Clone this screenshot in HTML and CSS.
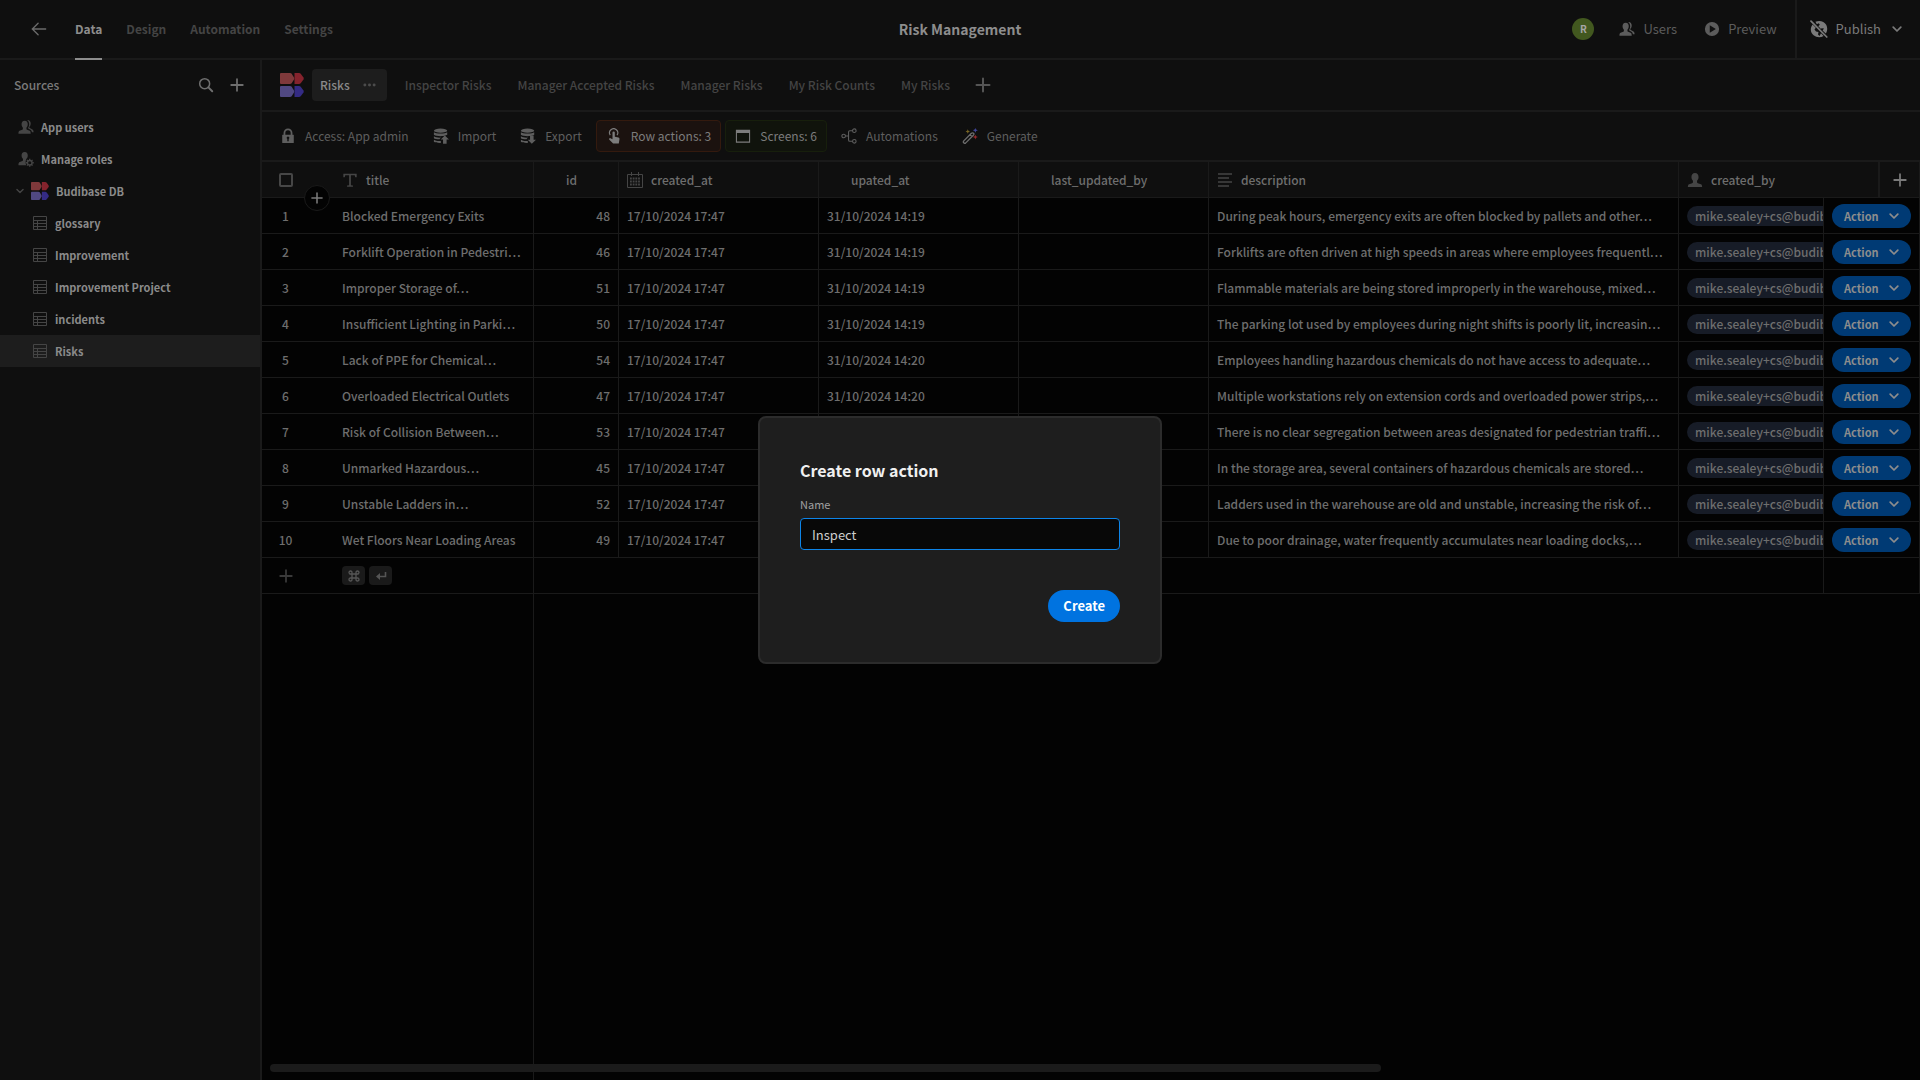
FILE: index.html
```html
<!DOCTYPE html>
<html lang="en">
<head>
<meta charset="utf-8">
<meta name="viewport" content="width=device-width, initial-scale=1">
<title>Risk Management</title>
<link rel="stylesheet" href="styles.css">
</head>
<body>
<svg class="defs" aria-hidden="true">
  <symbol id="i-back" viewBox="0 0 18 18"><path d="M16.500 9H1.800M8 2.500L1.500 9L8 15.500" fill="none" stroke="currentColor" stroke-width="1.500" stroke-linecap="round"/></symbol>
  <symbol id="i-search" viewBox="0 0 18 18"><circle cx="7.500" cy="7.500" r="5.600" fill="none" stroke="currentColor" stroke-width="1.700"/><path d="M11.700 11.700L16 16" stroke="currentColor" stroke-width="2.200" stroke-linecap="round"/></symbol>
  <symbol id="i-plus" viewBox="0 0 18 18"><path d="M9 2.500V15.500M2.500 9H15.500" stroke="currentColor" stroke-width="2" stroke-linecap="round"/></symbol>
  <symbol id="i-chev" viewBox="0 0 10 10"><path d="M1.200 3.200L5 7L8.800 3.200" fill="none" stroke="currentColor" stroke-width="1.700" stroke-linecap="round" stroke-linejoin="round"/></symbol>
  <symbol id="i-user" viewBox="0 0 18 18"><path d="M9 1C11.700 1 13 3 13 5.500C13 7.600 12.200 8.800 11.300 9.800V11.500C11.300 12 11.600 12.400 12.200 12.600L15.700 13.700C16.600 14.100 17 15 17 17H1C1 15 1.400 14.100 2.300 13.700L5.800 12.600C6.400 12.400 6.700 12 6.700 11.500V9.800C5.800 8.800 5 7.600 5 5.500C5 3 6.300 1 9 1Z" fill="currentColor"/></symbol>
  <symbol id="i-users" viewBox="0 0 18 18"><path d="M7.500 2C10 2 11 3.800 11 6C11 7.800 10.300 9 9.500 9.800V11.200C9.500 11.700 9.800 12 10.300 12.200L13 13.200C14 13.600 14.300 14.500 14.300 16.500H.5C.5 14.500 .9 13.600 1.800 13.200L4.700 12.200C5.200 12 5.500 11.700 5.500 11.200V9.800C4.700 9 4 7.800 4 6C4 3.800 5 2 7.500 2Z" fill="currentColor"/><path d="M10.200 1C13 .8 14.300 2.600 14.300 5C14.300 6.800 13.600 8 12.800 8.800V9.900L16.300 11.800C17.200 12.300 17.500 13 17.500 15H15.700C15.400 13.300 14.900 12.500 14 12L11.500 10.800V9.600C12.200 8.700 12.600 7.400 12.600 5.800C12.600 3.700 11.700 2 10.200 1Z" fill="currentColor"/></symbol>
  <symbol id="i-roles" viewBox="0 0 18 18"><path d="M7.500 1C10 1 11 2.800 11 5C11 6.800 10.300 8 9.500 8.800C8.400 10.600 8.200 14 9.200 16H.5C.5 13.800 1 12.800 2 12.500L4.900 11.300C5.400 11 5.600 10.600 5.600 10V8.800C4.700 8 4 6.800 4 5C4 2.800 5 1 7.500 1Z" fill="currentColor"/><circle cx="13.200" cy="13.200" r="2.600" fill="none" stroke="currentColor" stroke-width="1.600"/><path d="M13.200 8.700V10.300M13.200 16.100V17.700M8.700 13.200H10.300M16.100 13.200H17.700M10 10L11.100 11.100M15.300 15.300L16.400 16.400M16.400 10L15.300 11.100M11.100 15.300L10 16.400" stroke="currentColor" stroke-width="1.500"/></symbol>
  <symbol id="i-table" viewBox="0 0 14 14"><path d="M.5 .5H13.500V13.500H.5ZM.5 4.500H13.500M.5 7.500H13.500M.5 10.500H13.500M4.500 4.500V13.500" fill="none" stroke="currentColor"/></symbol>
  <symbol id="i-logo" viewBox="0 0 24 24"><path d="M0 1Q0 0 1 0H10Q11 0 11.700 .8L14 4.500Q14.600 5.500 14 6.500L11.700 10.200Q11 11 10 11H1Q0 11 0 10Z" fill="#7f393b"/><path d="M14.500 0H19Q20 0 20.700 .8L23.500 4.500Q24 5.500 23.500 6.500L20.700 10.200Q20 11 19 11H14.500Z" fill="#85232d"/><path d="M0 14Q0 13 1 13H10Q11 13 11.700 13.800L14 17.500Q14.600 18.500 14 19.500L11.700 23.200Q11 24 10 24H1Q0 24 0 23Z" fill="#504882"/><path d="M14.500 13H19Q20 13 20.700 13.800L23.500 17.500Q24 18.500 23.500 19.500L20.700 23.200Q20 24 19 24H14.500Z" fill="#342b84"/></symbol>
  <symbol id="i-play" viewBox="0 0 18 18"><path fill-rule="evenodd" d="M9 1A8 8 0 1 1 9 17A8 8 0 1 1 9 1ZM6.500 4.800V13.200L13.300 9Z" fill="currentColor"/></symbol>
  <symbol id="i-globe" viewBox="0 0 18 18"><path d="M2.600 4.500C-.2 8 .4 12.600 3.600 15.300C6.500 17.700 10.600 17.900 13.600 16L11 13.200L9.500 16L8 14.500L8.500 12L6 11.500L4.500 9.500L5.800 7.800Z" fill="currentColor"/><path d="M5.400 1.800C9.500 -.2 14.200 1.300 16.200 4.800C17.700 7.600 17.500 11 15.800 13.600L12.600 10.400L14 8.500L11.500 8.300L11 9L8.300 6.200L9.800 4.800L8.800 3.300L6.800 4.200Z" fill="currentColor"/><path d="M1 1.200L16.800 17" stroke="currentColor" stroke-width="1.700" stroke-linecap="round"/></symbol>
  <symbol id="i-more" viewBox="0 0 14 4"><circle cx="2" cy="2" r="1.600" fill="currentColor"/><circle cx="7" cy="2" r="1.600" fill="currentColor"/><circle cx="12" cy="2" r="1.600" fill="currentColor"/></symbol>
  <symbol id="i-lock" viewBox="0 0 18 18"><path d="M5 8V5.500A4 4 0 0 1 13 5.500V8" fill="none" stroke="currentColor" stroke-width="2"/><path fill-rule="evenodd" d="M3 7.500H15Q15.500 7.500 15.500 8V16.500Q15.500 17 15 17H3Q2.500 17 2.500 16.500V8Q2.500 7.500 3 7.500ZM8.200 12.500V15H9.800V12.500A1.500 1.500 0 1 0 8.200 12.500Z" fill="currentColor"/></symbol>
  <symbol id="i-db" viewBox="0 0 18 18"><ellipse cx="8.500" cy="3" rx="7.500" ry="2.300" fill="currentColor"/><path d="M1 4.800C3 6.800 14 6.800 16 4.800V7.500L14 8.500C11 9.600 3.500 9.500 1 7.600ZM1 9.300C3 10.700 6 11 8.700 10.800L7.400 12.700C5 12.800 2 12.300 1 11.500ZM1 13.200C3 14.600 6 14.700 8.800 14.500V16.800C6 17 2 16.500 1 15.500Z" fill="currentColor"/></symbol>
  <symbol id="i-import" viewBox="0 0 18 18"><use href="#i-db" width="18" height="18"/><path d="M13.300 8.500L18 13H15.300V17.800H11.300V13H8.700Z" fill="currentColor"/></symbol>
  <symbol id="i-export" viewBox="0 0 18 18"><use href="#i-db" width="18" height="18"/><path d="M13.300 17.800L18 13.300H15.300V8.500H11.300V13.300H8.700Z" fill="currentColor"/></symbol>
  <symbol id="i-touch" viewBox="0 0 18 18"><path d="M4.800 8A4.600 4.600 0 1 1 12.400 8" fill="none" stroke="currentColor" stroke-width="1.300"/><path d="M7.300 5.200A1.300 1.300 0 0 1 9.900 5.200V9.800L14 10.600Q15.300 11 15.200 12.500L14.400 17.500H8L3.500 12.800Q3.400 11.200 5 11.400L7.300 12.700Z" fill="currentColor"/></symbol>
  <symbol id="i-screen" viewBox="0 0 18 18"><path fill-rule="evenodd" d="M1 2H17V16.500H1ZM2.200 5.500V15.300H15.800V5.500Z" fill="currentColor"/></symbol>
  <symbol id="i-flow" viewBox="0 0 18 18"><g fill="none" stroke="currentColor" stroke-width="1.200"><circle cx="3" cy="9" r="2"/><circle cx="15" cy="3" r="2"/><circle cx="15" cy="15" r="2"/><path d="M5 9H8.500M13 3H10Q8.500 3 8.500 4.500V13.500Q8.500 15 10 15H13"/></g></symbol>
  <symbol id="i-wand" viewBox="0 0 18 18"><path d="M2 14.500L10.500 6Q12 5 13 6T12.500 8.500L4 17Q3 17.700 2 16.700T2 14.500ZM9 7.500L11.300 9.700" fill="none" stroke="#6d6d6d" stroke-width="1.500"/><path d="M6.500 1.500L7.200 3.200L9 4L7.200 4.700L6.500 6.500L5.800 4.700L4 4L5.800 3.200Z" fill="#776423"/><path d="M15 0L15.800 1.700L17.800 2.500L15.800 3.300L15 5.300L14.200 3.300L12.200 2.500L14.200 1.700Z" fill="#40469a"/><path d="M15 7.500L15.800 9.400L17.800 10.200L15.800 11L15 13L14.200 11L12.200 10.200L14.200 9.400Z" fill="#97282b"/></symbol>
  <symbol id="i-text" viewBox="0 0 18 18"><path d="M1.500 2H16.500V6H15L14.300 3.700H10V14.800L12.300 15.200V16.500H5.700V15.200L8 14.800V3.700H3.700L3 6H1.500Z" fill="currentColor"/></symbol>
  <symbol id="i-cal" viewBox="0 0 16 16"><path d="M.5 2.500H15.500V15.500H.5ZM4.500 0V4M11.500 0V4" fill="none" stroke="currentColor"/><path d="M3 6.500H13M3 9.500H13M3 12.500H13" stroke="currentColor" stroke-width="1.800" stroke-dasharray="1.800 .9"/></symbol>
  <symbol id="i-lines" viewBox="0 0 16 16"><path d="M1 2H15M1 6H12M1 10H15M1 14H12" stroke="currentColor" stroke-width="1.500"/></symbol>
  <symbol id="i-cmd" viewBox="0 0 12 12"><path d="M4 4H8V8H4ZM4 4H2.700A1.500 1.500 0 1 1 4 2.700ZM8 4V2.700A1.500 1.500 0 1 1 9.300 4ZM8 8H9.300A1.500 1.500 0 1 1 8 9.300ZM4 8V9.300A1.500 1.500 0 1 1 2.700 8Z" fill="none" stroke="currentColor" stroke-width="1.300"/></symbol>
  <symbol id="i-enter" viewBox="0 0 12 12"><path d="M10.500 2V6.500H3" fill="none" stroke="currentColor" stroke-width="1.600"/><path d="M5 3V10L1 6.500Z" fill="currentColor"/></symbol>
</svg>

<div class="app">
  <header class="topnav">
    <nav class="topnav-left">
      <a class="back" href="#" aria-label="Back"><svg class="ic16"><use href="#i-back"/></svg></a>
      <a class="navtab active" href="#">Data</a>
      <a class="navtab" href="#">Design</a>
      <a class="navtab" href="#">Automation</a>
      <a class="navtab" href="#">Settings</a>
    </nav>
    <h1 class="app-title">Risk Management</h1>
    <div class="topnav-right">
      <span class="avatar">R</span>
      <button class="navbtn users"><svg class="ic16"><use href="#i-users"/></svg>Users</button>
      <button class="navbtn preview"><svg class="ic16"><use href="#i-play"/></svg>Preview</button>
      <button class="navbtn publish"><svg class="ic18"><use href="#i-globe"/></svg>Publish<svg class="ic10"><use href="#i-chev"/></svg></button>
    </div>
  </header>

  <div class="workspace">
    <aside class="sidebar">
      <div class="side-head">
        <h2>Sources</h2>
        <button aria-label="Search"><svg class="ic16"><use href="#i-search"/></svg></button>
        <button aria-label="Add source"><svg class="ic16"><use href="#i-plus"/></svg></button>
      </div>
      <nav class="side-list">
        <a href="#" class="side-item"><svg class="ic16"><use href="#i-users"/></svg>App users</a>
        <a href="#" class="side-item"><svg class="ic16"><use href="#i-roles"/></svg>Manage roles</a>
        <a href="#" class="side-item db"><svg class="ic8"><use href="#i-chev"/></svg><svg class="ic18"><use href="#i-logo"/></svg>Budibase DB</a>
        <a href="#" class="side-item tbl"><svg class="ic14"><use href="#i-table"/></svg>glossary</a>
        <a href="#" class="side-item tbl"><svg class="ic14"><use href="#i-table"/></svg>Improvement</a>
        <a href="#" class="side-item tbl"><svg class="ic14"><use href="#i-table"/></svg>Improvement Project</a>
        <a href="#" class="side-item tbl"><svg class="ic14"><use href="#i-table"/></svg>incidents</a>
        <a href="#" class="side-item tbl selected"><svg class="ic14"><use href="#i-table"/></svg>Risks</a>
      </nav>
    </aside>

    <main class="content">
      <nav class="views">
        <svg class="ic24"><use href="#i-logo"/></svg>
        <a href="#" class="view current">Risks<svg class="more"><use href="#i-more"/></svg></a>
        <a href="#" class="view">Inspector Risks</a>
        <a href="#" class="view">Manager Accepted Risks</a>
        <a href="#" class="view">Manager Risks</a>
        <a href="#" class="view">My Risk Counts</a>
        <a href="#" class="view">My Risks</a>
        <button class="view-add" aria-label="Add view"><svg class="ic18"><use href="#i-plus"/></svg></button>
      </nav>

      <div class="toolbar">
        <button class="tool"><svg class="ic16"><use href="#i-lock"/></svg>Access: App admin</button>
        <button class="tool"><svg class="ic16"><use href="#i-import"/></svg>Import</button>
        <button class="tool"><svg class="ic16"><use href="#i-export"/></svg>Export</button>
        <button class="tool orange"><svg class="ic16"><use href="#i-touch"/></svg>Row actions: 3</button>
        <button class="tool green"><svg class="ic16"><use href="#i-screen"/></svg>Screens: 6</button>
        <button class="tool"><svg class="ic16"><use href="#i-flow"/></svg>Automations</button>
        <button class="tool"><svg class="ic16"><use href="#i-wand"/></svg>Generate</button>
      </div>

      <div class="grid">
        <table>
          <colgroup>
            <col class="c-num"><col class="c-title"><col class="c-id"><col class="c-date"><col class="c-date"><col class="c-by"><col><col class="c-created"><col class="c-act"><col class="c-add">
          </colgroup>
          <thead>
            <tr>
              <th class="num"><input type="checkbox" aria-label="Select all rows"><button class="insert" aria-label="Insert row"><svg class="ic14"><use href="#i-plus"/></svg></button></th>
              <th class="sticky"><span class="head"><svg class="ic16"><use href="#i-text"/></svg>title</span></th>
              <th><span class="head"><span class="ic16"></span>id</span></th>
              <th><span class="head"><svg class="ic16"><use href="#i-cal"/></svg>created_at</span></th>
              <th><span class="head"><span class="ic16"></span>upated_at</span></th>
              <th><span class="head"><span class="ic16"></span>last_updated_by</span></th>
              <th><span class="head"><svg class="ic16"><use href="#i-lines"/></svg>description</span></th>
              <th colspan="2"><span class="head"><svg class="ic16"><use href="#i-user"/></svg>created_by</span></th>
              <th class="addcol"><button aria-label="Add column"><svg class="ic16"><use href="#i-plus"/></svg></button></th>
            </tr>
          </thead>
          <tbody>
            <tr><td class="num">1</td><td class="sticky">Blocked Emergency Exits</td><td class="id">48</td><td>17/10/2024 17:47</td><td>31/10/2024 14:19</td><td></td><td>During peak hours, emergency exits are often blocked by pallets and other…</td><td class="who"><span>mike.sealey+cs@budib</span></td><td class="act" colspan="2"><button>Action<svg class="ic10"><use href="#i-chev"/></svg></button></td></tr>
            <tr><td class="num">2</td><td class="sticky">Forklift Operation in Pedestri…</td><td class="id">46</td><td>17/10/2024 17:47</td><td>31/10/2024 14:19</td><td></td><td>Forklifts are often driven at high speeds in areas where employees frequentl…</td><td class="who"><span>mike.sealey+cs@budib</span></td><td class="act" colspan="2"><button>Action<svg class="ic10"><use href="#i-chev"/></svg></button></td></tr>
            <tr><td class="num">3</td><td class="sticky">Improper Storage of…</td><td class="id">51</td><td>17/10/2024 17:47</td><td>31/10/2024 14:19</td><td></td><td>Flammable materials are being stored improperly in the warehouse, mixed…</td><td class="who"><span>mike.sealey+cs@budib</span></td><td class="act" colspan="2"><button>Action<svg class="ic10"><use href="#i-chev"/></svg></button></td></tr>
            <tr><td class="num">4</td><td class="sticky">Insufficient Lighting in Parki…</td><td class="id">50</td><td>17/10/2024 17:47</td><td>31/10/2024 14:19</td><td></td><td>The parking lot used by employees during night shifts is poorly lit, increasin…</td><td class="who"><span>mike.sealey+cs@budib</span></td><td class="act" colspan="2"><button>Action<svg class="ic10"><use href="#i-chev"/></svg></button></td></tr>
            <tr><td class="num">5</td><td class="sticky">Lack of PPE for Chemical…</td><td class="id">54</td><td>17/10/2024 17:47</td><td>31/10/2024 14:20</td><td></td><td>Employees handling hazardous chemicals do not have access to adequate…</td><td class="who"><span>mike.sealey+cs@budib</span></td><td class="act" colspan="2"><button>Action<svg class="ic10"><use href="#i-chev"/></svg></button></td></tr>
            <tr><td class="num">6</td><td class="sticky">Overloaded Electrical Outlets</td><td class="id">47</td><td>17/10/2024 17:47</td><td>31/10/2024 14:20</td><td></td><td>Multiple workstations rely on extension cords and overloaded power strips,…</td><td class="who"><span>mike.sealey+cs@budib</span></td><td class="act" colspan="2"><button>Action<svg class="ic10"><use href="#i-chev"/></svg></button></td></tr>
            <tr><td class="num">7</td><td class="sticky">Risk of Collision Between…</td><td class="id">53</td><td>17/10/2024 17:47</td><td></td><td></td><td>There is no clear segregation between areas designated for pedestrian traffi…</td><td class="who"><span>mike.sealey+cs@budib</span></td><td class="act" colspan="2"><button>Action<svg class="ic10"><use href="#i-chev"/></svg></button></td></tr>
            <tr><td class="num">8</td><td class="sticky">Unmarked Hazardous…</td><td class="id">45</td><td>17/10/2024 17:47</td><td></td><td></td><td>In the storage area, several containers of hazardous chemicals are stored…</td><td class="who"><span>mike.sealey+cs@budib</span></td><td class="act" colspan="2"><button>Action<svg class="ic10"><use href="#i-chev"/></svg></button></td></tr>
            <tr><td class="num">9</td><td class="sticky">Unstable Ladders in…</td><td class="id">52</td><td>17/10/2024 17:47</td><td></td><td></td><td>Ladders used in the warehouse are old and unstable, increasing the risk of…</td><td class="who"><span>mike.sealey+cs@budib</span></td><td class="act" colspan="2"><button>Action<svg class="ic10"><use href="#i-chev"/></svg></button></td></tr>
            <tr><td class="num">10</td><td class="sticky">Wet Floors Near Loading Areas</td><td class="id">49</td><td>17/10/2024 17:47</td><td></td><td></td><td>Due to poor drainage, water frequently accumulates near loading docks,…</td><td class="who"><span>mike.sealey+cs@budib</span></td><td class="act" colspan="2"><button>Action<svg class="ic10"><use href="#i-chev"/></svg></button></td></tr>
            <tr class="newrow"><td class="num"><svg class="ic16"><use href="#i-plus"/></svg></td><td class="sticky"><span class="keys"><kbd><svg class="ic12"><use href="#i-cmd"/></svg></kbd><kbd><svg class="ic12"><use href="#i-enter"/></svg></kbd></span></td><td colspan="6"></td><td colspan="2"></td></tr>
          </tbody>
        </table>
        <div class="scrollbar"></div>
      </div>
    </main>
  </div>
</div>

<div class="underlay">
  <form class="modal" role="dialog" aria-labelledby="modal-title">
    <h2 id="modal-title">Create row action</h2>
    <label for="action-name">Name</label>
    <input id="action-name" type="text" value="Inspect">
    <button type="button">Create</button>
  </form>
</div>
</body>
</html>
```

FILE: styles.css
```css
* { box-sizing: border-box; }
html, body { height: 100%; }
body {
  margin: 0;
  background: #030303;
  color: #6e6e6e;
  font: 400 12px/20px "Noto Sans CJK KR", "Noto Sans", sans-serif;
  overflow: hidden;
}
a { color: inherit; text-decoration: none; }
button {
  display: flex;
  align-items: center;
  margin: 0;
  padding: 0;
  border: 0;
  background: none;
  color: inherit;
  font: inherit;
}
h1, h2 { margin: 0; font-size: 12px; }
svg { display: block; flex: none; }
.defs { position: absolute; width: 0; height: 0; }
.ic8 { width: 8px; height: 8px; }
.ic10 { width: 10px; height: 10px; }
.ic12 { width: 12px; height: 12px; }
.ic14 { width: 14px; height: 14px; }
.ic16 { width: 16px; height: 16px; flex: none; }
.ic18 { width: 18px; height: 18px; }
.ic24 { width: 24px; height: 24px; }

.app { display: flex; flex-direction: column; height: 100%; }

/* Top navigation */
.topnav {
  display: grid;
  grid-template-columns: 1fr auto 1fr;
  flex: none;
  height: 60px;
  border-bottom: 2px solid #1a1a1a;
  background: #0f0f0f;
}
.topnav-left { display: flex; align-items: stretch; gap: 24px; padding-left: 31px; }
.back { display: flex; align-items: center; margin-right: 4px; color: #6b6b6b; }
.navtab {
  display: flex;
  align-items: center;
  margin-bottom: -2px;
  border-bottom: 2px solid transparent;
  color: #444;
  font-weight: 700;
}
.navtab.active { color: #8d8d8d; border-color: #8d8d8d; }
.app-title { align-self: center; color: #8d8d8d; font-size: 14px; font-weight: 700; }
.topnav-right { display: flex; align-items: stretch; justify-content: flex-end; }
.avatar {
  align-self: center;
  width: 22px;
  height: 22px;
  margin-right: 25px;
  border-radius: 50%;
  background: #42581f;
  color: #a5a5a5;
  font-size: 10px;
  font-weight: 700;
  line-height: 22px;
  text-align: center;
}
.navbtn { gap: 8px; font-size: 13px; }
.users { margin-right: 27px; color: #5c5c5c; }
.preview { margin-right: 18px; color: #5c5c5c; }
.publish { padding: 0 18px 0 13px; border-left: 2px solid #1a1a1a; color: #7a7a7a; }
.publish .ic10 { margin-left: 3px; }

.workspace { display: flex; flex: 1; min-height: 0; }

/* Sources */
.sidebar { flex: none; width: 262px; border-right: 2px solid #1a1a1a; background: #0f0f0f; }
.side-head { display: flex; align-items: center; gap: 15px; height: 49px; padding: 0 15px 0 14px; }
.side-head h2 { flex: 1; color: #7a7a7a; font-weight: 500; }
.side-list { padding-top: 2px; }
.side-item {
  display: flex;
  align-items: center;
  gap: 7px;
  height: 32px;
  padding-left: 18px;
  color: #8a8a8a;
  font-size: 11px;
  font-weight: 700;
}
.side-item svg { color: #454545; }
.side-item.db { padding-left: 16px; }
.side-item.tbl { padding-left: 33px; gap: 8px; }
.side-item.selected { background: #1d1d1d; }

.content { display: flex; flex-direction: column; flex: 1; min-width: 0; }

/* Table and its views */
.views {
  display: flex;
  align-items: center;
  gap: 10px;
  flex: none;
  height: 52px;
  padding: 0 18px;
  border-bottom: 2px solid #1a1a1a;
  background: #0f0f0f;
}
.view { display: flex; align-items: center; height: 32px; padding: 0 8px; color: #444; font-weight: 500; white-space: nowrap; }
.view.current { margin-left: -2px; background: #1d1d1d; border-radius: 4px; color: #8a8a8a; }
.more { width: 13px; height: 4px; margin: 0 3px 0 13px; color: #4c4c4c; }
.view-add { margin-left: 6px; color: #555; }

.toolbar {
  display: flex;
  align-items: center;
  gap: 4px;
  flex: none;
  height: 50px;
  padding: 0 8px;
  border-bottom: 2px solid #1a1a1a;
  background: #0f0f0f;
}
.tool { gap: 9px; height: 32px; padding: 0 9px; border: 1px solid transparent; border-radius: 4px; color: #5e5e5e; white-space: nowrap; }
.orange { background: #1b120f; border-color: #341a0e; color: #7c7c7c; }
.green { background: #10130c; border-color: #171f0c; color: #7c7c7c; }

/* Grid */
.grid {
  display: flex;
  flex-direction: column;
  justify-content: space-between;
  flex: 1;
  min-height: 0;
  background: linear-gradient(#1a1a1a, #1a1a1a) 271px 0 / 1px 100% no-repeat #030303;
}
table { width: 100%; table-layout: fixed; border-collapse: separate; border-spacing: 0; }
.c-num { width: 71px; }
.c-title { width: 201px; }
.c-id { width: 85px; }
.c-date { width: 200px; }
.c-by { width: 190px; }
.c-created { width: 145px; }
.c-act { width: 55px; }
.c-add { width: 41px; }
th, td {
  height: 36px;
  padding: 0 8px;
  overflow: hidden;
  border-right: 1px solid #1a1a1a;
  border-bottom: 1px solid #1a1a1a;
  font-weight: 500;
  text-align: left;
  white-space: nowrap;
}
th { background: #0f0f0f; }
.sticky { padding-left: 9px; }
.head { display: flex; align-items: center; gap: 8px; }
.head svg { color: #454545; }
.num { border-right: 0; padding: 0 0 0 17px; }
td.num { padding: 0 24px 0 0; text-align: center; }
th.num { position: relative; overflow: visible; }
.num input {
  display: block;
  appearance: none;
  width: 14px;
  height: 14px;
  margin: 0;
  border: 2px solid #464646;
  border-radius: 2px;
}
.insert {
  position: absolute;
  left: 42px;
  top: 23px;
  justify-content: center;
  width: 26px;
  height: 26px;
  border: 1px solid #1a1a1a;
  border-radius: 50%;
  background: #030303;
  color: #7a7a7a;
}
.id { text-align: right; }
.addcol { padding: 0 0 0 12px; border-left: 1px solid #1a1a1a; color: #7a7a7a; }
.who { padding-right: 0; }
.who span { display: block; width: 200px; height: 20px; padding: 0 8px; border-radius: 10px; background: #171c27; }
.act { padding: 0 8px; }
.act button {
  justify-content: space-between;
  width: 100%;
  height: 24px;
  padding: 0 12px;
  border-radius: 12px;
  background: #003a74;
  color: #8d8d8d;
  font-size: 11px;
  font-weight: 700;
}
.newrow svg { margin: 0 auto; color: #3a3a3a; }
.keys { display: flex; gap: 4px; }
kbd { display: flex; align-items: center; width: 23px; height: 19px; border-radius: 4px; background: #1a1a1a; }
.newrow kbd svg { color: #555; }
.scrollbar { flex: none; width: 67%; height: 8px; margin: 0 0 8px 8px; border-radius: 4px; background: #1b1b1b; }

/* Modal */
.underlay { position: fixed; inset: 0; display: flex; align-items: center; justify-content: center; }
.modal {
  display: flex;
  flex-direction: column;
  width: 404px;
  padding: 40px;
  border: 2px solid #2c2c2c;
  border-radius: 8px;
  background: #1e1e1e;
}
.modal h2 { color: #f0f0f0; font-size: 16px; font-weight: 700; line-height: 24px; }
.modal label { margin: 12px 0 4px; color: #a0a0a0; font-size: 11px; }
.modal input {
  height: 32px;
  padding: 0 11px;
  border: 1px solid #0d84e8;
  border-radius: 4px;
  outline: 0;
  background: #080808;
  color: #cecece;
  font: inherit;
  font-size: 13px;
}
.modal button {
  align-self: flex-end;
  height: 32px;
  margin-top: 40px;
  padding: 0 15px;
  border-radius: 16px;
  background: #0073e0;
  color: #fff;
  font-size: 13px;
  font-weight: 700;
}
```
